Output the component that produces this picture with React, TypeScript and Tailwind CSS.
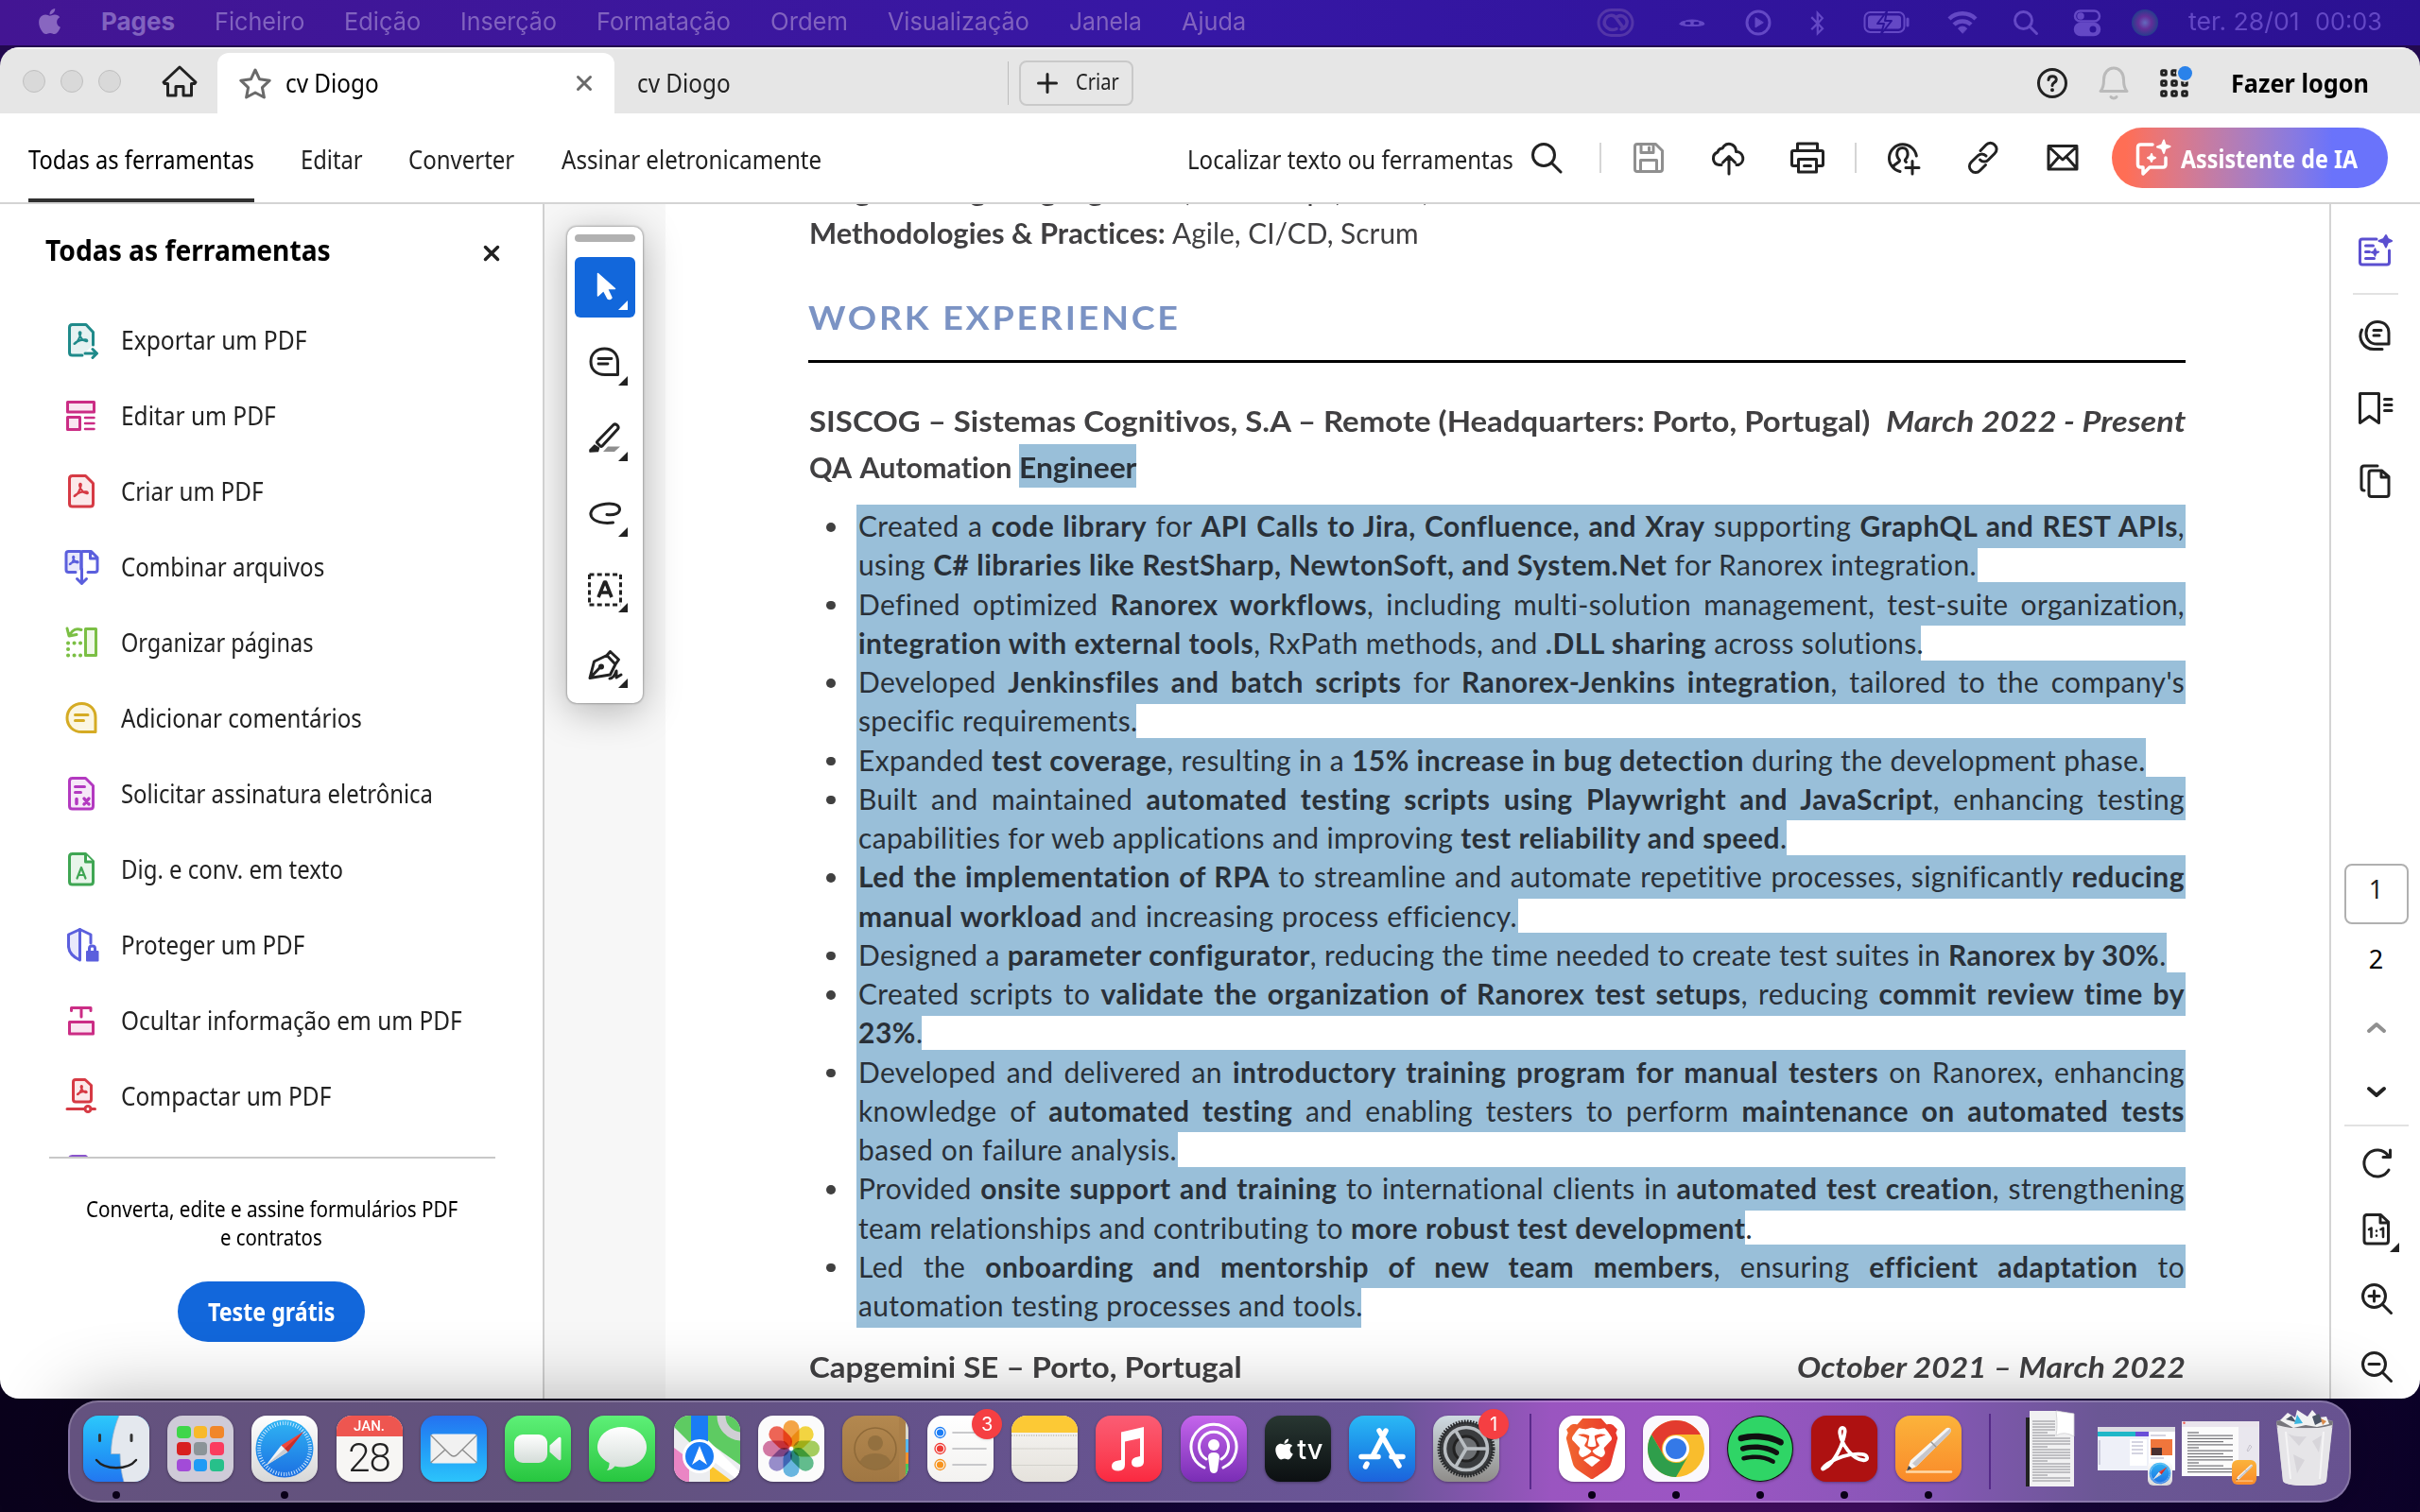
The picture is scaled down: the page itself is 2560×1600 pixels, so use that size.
import React, { useLayoutEffect, useRef, useState } from "react";
import { FaApple, FaSpotify, FaBluetoothB } from "react-icons/fa";
import { SiBrave } from "react-icons/si";

/* Text squeezed horizontally so that it fills exactly `w` pixels. */
function Fit({ w, className = "", children }: { w: number; className?: string; children: React.ReactNode }) {
  const ref = useRef<HTMLSpanElement>(null);
  const [k, setK] = useState(1);
  useLayoutEffect(() => {
    if (ref.current) setK(w / ref.current.offsetWidth);
  }, [w]);
  return (
    <span className={"block shrink-0 whitespace-nowrap " + className} style={{ width: w }}>
      <span ref={ref} className="inline-block origin-left" style={{ transform: `scaleX(${k})` }}>
        {children}
      </span>
    </span>
  );
}

type IconProps = { w?: number; h?: number; className?: string; sw?: number; children: React.ReactNode };
function Svg({ w = 40, h = 40, className = "", sw = 3, children }: IconProps) {
  return (
    <svg
      width={w}
      height={h}
      viewBox={`0 0 ${w} ${h}`}
      className={"block shrink-0 " + className}
      fill="none"
      stroke="currentColor"
      strokeWidth={sw}
      strokeLinecap="round"
      strokeLinejoin="round"
    >
      {children}
    </svg>
  );
}

const SWIRL =
  "M5 19c3-1.5 6.5-8 7.2-13 .3-2.2-2.2-2.2-1.8.5C11 10.5 15 16 19 16.2c2 .1 1.5-2-.5-2.2-4.5-.4-9 1.2-12.5 3.4-2 1.4-2.5 2.6-1 1.6z";

/* ---------- menu bar ---------- */

function MenuBar() {
  return (
    <header className="flex h-12 shrink-0 items-center bg-linear-to-r from-[#431593] via-[#3617a5] to-[#2b1192] font-['Inter'] text-[26px] leading-[45px] text-[#8163bf]">
      <FaApple className="ml-[37px] size-[31px] shrink-0 -translate-y-0.5 text-[#8866c0]" />
      <Fit w={78} className="ml-[39px] h-12 font-bold">Pages</Fit>
      <Fit w={95} className="ml-[42px] h-12">Ficheiro</Fit>
      <Fit w={81} className="ml-[42px] h-12">Edição</Fit>
      <Fit w={102} className="ml-[42px] h-12">Inserção</Fit>
      <Fit w={142} className="ml-[42px] h-12">Formatação</Fit>
      <Fit w={82} className="ml-[42px] h-12">Ordem</Fit>
      <Fit w={150} className="ml-[42px] h-12">Visualização</Fit>
      <Fit w={77} className="ml-[42px] h-12">Janela</Fit>
      <Fit w={68} className="ml-[42px] h-12">Ajuda</Fit>
      <div className="ml-[371px] flex h-12 items-center text-[#6448c5]">
        <Svg w={40} h={30} sw={3} className="text-[#5335a8]">
          <rect x="2" y="1.500" width="36" height="27" rx="13.500" />
          <path d="M21 21.500C13 25 6 18 9 11.500c2.500-5 8.500-5.500 11.500-1.500l7 9.500M22 8.500c6-3 12 3 9.500 9-1 2.500-3 4-5.500 4.500" strokeWidth="3.500" />
        </Svg>
        <Svg w={30} h={12} sw={2.500} className="ml-[46px]">
          <path d="M2 7.500q0-2.500 5-3 3-1.500 8-1.500t8 1.500q5 .5 5 3-1 2-13 2t-13-2z" fill="currentColor" strokeWidth="1" />
          <path d="M9 6.500h3M18 6.500h3" stroke="#2d1399" strokeWidth="3" />
        </Svg>
        <Svg w={30} h={30} sw={3} className="ml-[40px]">
          <circle cx="15" cy="15" r="12" />
          <path d="M12 10v10l8-5z" fill="currentColor" strokeWidth="1" />
        </Svg>
        <FaBluetoothB className="ml-[34px] size-[27px]" />
        <Svg w={50} h={28} sw={2} className="ml-[35px]">
          <rect x="1.500" y="3" width="42" height="21" rx="6" />
          <rect x="5" y="6.500" width="35" height="14" rx="3" fill="currentColor" stroke="none" />
          <path d="M47 10v7" strokeWidth="3" />
          <path d="M25 2 15 15h7l-3 11 11-14h-7z" fill="currentColor" stroke="#2d1399" strokeWidth="2" />
        </Svg>
        <Svg w={36} h={28} sw={4.500} className="ml-[37px]">
          <path d="M4 10a20 20 0 0 1 28 0M9 16a13 13 0 0 1 18 0" strokeLinecap="butt" />
          <path d="M18 25l-4.500-5a6 6 0 0 1 9 0z" fill="currentColor" strokeWidth="1" />
        </Svg>
        <Svg w={28} h={28} sw={3} className="ml-[35px]">
          <circle cx="11.500" cy="11.500" r="9" />
          <path d="M18 18l7.500 7.500" />
        </Svg>
        <Svg w={30} h={30} sw={2.500} className="ml-[36px]">
          <rect x="2" y="2.500" width="26" height="11" rx="5.500" />
          <circle cx="8" cy="8" r="2.500" fill="currentColor" />
          <rect x="2" y="16" width="26" height="12" rx="6" fill="currentColor" />
          <circle cx="21" cy="22" r="3.500" fill="#2d1399" stroke="none" />
        </Svg>
        <div className="ml-[32px] size-[28px] rounded-full bg-[radial-gradient(circle_at_50%_50%,#7a8fd0_0%,#7a3a98_35%,#254f8a_70%,#2b4078_100%)] opacity-70" />
        <Fit w={118} className="ml-[32px] h-12">ter. 28/01</Fit>
        <Fit w={71} className="ml-[16px] h-12">00:03</Fit>
      </div>
    </header>
  );
}

/* ---------- title bar with tabs ---------- */

function TitleBar() {
  return (
    <div className="flex h-[70px] shrink-0 items-center border-t-2 border-[#f4f4f4] bg-[#e6e6e6] font-['Noto_Sans'] text-[27px] leading-[68px] text-[#222]">
      <div className="ml-6 flex gap-4">
        <i className="size-6 rounded-full border border-[#bfbfbf] bg-[#d9d9d9]" />
        <i className="size-6 rounded-full border border-[#bfbfbf] bg-[#d9d9d9]" />
        <i className="size-6 rounded-full border border-[#bfbfbf] bg-[#d9d9d9]" />
      </div>
      <Svg w={40} h={36} className="ml-[42px]">
        <path d="M3 19 20 3l17 16-1 1.500h-3.500V33H24V23.500h-8V33H7.500V20.500H4z" />
      </Svg>
      <div className="ml-[20px] mt-1 flex h-16 w-[420px] items-center rounded-t-xl bg-white text-black">
        <Svg w={36} h={34} className="ml-[22px] text-[#6a6a6a]" sw={3}>
          <path d="M18 3l4.600 9.800 10.600 1.400-7.800 7.400 2 10.400L18 27l-9.400 5 2-10.400-7.800-7.400 10.600-1.400z" />
        </Svg>
        <Fit w={99} className="ml-[14px] h-16 leading-[64px]">cv Diogo</Fit>
        <Svg w={18} h={18} className="ml-[208px] text-[#6a6a6a]">
          <path d="M2.500 2.500l13 13M15.500 2.500l-13 13" />
        </Svg>
      </div>
      <Fit w={99} className="ml-[24px] mt-1 h-16 leading-[64px]">cv Diogo</Fit>
      <div className="ml-[293px] mt-1 h-[46px] w-px bg-[#bdbdbd]" />
      <button className="ml-[11px] mt-1 flex h-12 w-[121px] items-center rounded-lg border-2 border-[#c9c9c9] text-[24px]">
        <Svg w={22} h={22} className="ml-[17px]">
          <path d="M11 1.500v19M1.500 11h19" />
        </Svg>
        <Fit w={46} className="ml-[19px] h-11 leading-[40px]">Criar</Fit>
      </button>
      <Svg w={34} h={34} className="ml-[955px] mt-1">
        <circle cx="17" cy="17" r="14.500" />
        <path d="M13 13.500c.3-5 8.300-5 8.300-.3 0 3.200-4.300 3-4.300 6.300" />
        <circle cx="17" cy="24.300" r="1" fill="currentColor" strokeWidth="2" />
      </Svg>
      <Svg w={34} h={38} className="ml-[31px] mt-1 text-[#bababa]">
        <path d="M3 27.500h28c-3-3-3.500-6-3.500-12C27.500 8 23 3 17 3S6.500 8 6.500 15.500c0 6-.5 9-3.500 12zM14 33.500c1.500 2 4.500 2 6 0" />
      </Svg>
      <div className="relative ml-[32px] mt-1">
        <Svg w={30} h={30} sw={3}>
          {[4, 15, 26].map((y) =>
            [4, 15, 26].map((x) => <rect key={x + "-" + y} x={x - 2.300} y={y - 2.300} width="4.600" height="4.600" rx="1" />)
          )}
        </Svg>
        <i className="absolute -top-[3px] right-[-4px] size-[15px] rounded-full bg-[#2a82ea] ring-2 ring-[#e6e6e6]" />
      </div>
      <Fit w={146} className="ml-[45px] mt-1 h-16 font-bold leading-[64px] text-black">Fazer logon</Fit>
    </div>
  );
}

/* ---------- toolbar ---------- */

function ToolBar() {
  return (
    <div className="flex h-24 shrink-0 items-center border-b-2 border-[#d4d4d4] bg-white font-['Noto_Sans'] text-[27px] leading-[97px] text-[#222]">
      <div className="ml-[30px] h-[94px] border-b-4 border-[#303030] text-black">
        <Fit w={239}>Todas as ferramentas</Fit>
      </div>
      <Fit w={66} className="ml-[49px] h-[94px]">Editar</Fit>
      <Fit w={112} className="ml-[48px] h-[94px]">Converter</Fit>
      <Fit w={275} className="ml-[50px] h-[94px]">Assinar eletronicamente</Fit>
      <Fit w={345} className="ml-[387px] h-[94px]">Localizar texto ou ferramentas</Fit>
      <Svg w={34} h={34} className="ml-[18px]">
        <circle cx="14" cy="14" r="11.500" />
        <path d="M22.500 22.500 32 32" />
      </Svg>
      <div className="ml-[39px] h-8 w-0.5 bg-[#d5d5d5]" />
      <Svg w={34} h={34} className="ml-[33px] text-[#8f8f8f]">
        <path d="M5 2.500h19.500l7 7V29q0 2.500-2.500 2.500H5Q2.500 31.500 2.500 29V5Q2.500 2.500 5 2.500zM9 3v8.500h13V3M8.500 31V19.500h17V31" />
        <path d="M17.500 6v3" />
      </Svg>
      <Svg w={40} h={38} className="ml-[48px]">
        <path d="M12 26.500H9.500A7 7 0 0 1 8 13c1-3 3-4 5-4 2-4 6-6 10-4 3 1.300 4.500 4.500 4.500 7.500A7.200 7.200 0 0 1 30 26.500h-2M20 36V18M13.500 24l6.500-6.500 6.500 6.500" />
      </Svg>
      <Svg w={38} h={36} className="ml-[44px]">
        <path d="M8.500 10V3h21v7M8.500 26.500H4q-1.500 0-1.500-1.500V12Q2.500 10.500 4 10.500h30q1.500 0 1.500 1.500v13q0 1.500-1.500 1.500h-4.500M9.500 19.500h19V33h-19zM15.500 26.500h7" />
      </Svg>
      <div className="ml-[31px] h-8 w-0.5 bg-[#d5d5d5]" />
      <Svg w={40} h={38} className="ml-[30px]">
        <path d="M16 33.500A14.500 14.500 0 1 1 33.300 17M9 28.500c1-4 7-4 6.500-7C11 17 12 8.500 18.500 8.500s7 8.500 3 12.500c-.5 1 .3 2 1 2.500M29 22.500v13.500M22 29.500h14" />
      </Svg>
      <Svg w={36} h={36} className="ml-[46px]">
        <path d="M15 10.500l6-6.200a6 6 0 0 1 9 0c2.800 2.500 2.800 6.500 0 9.200l-6.500 6.500a6 6 0 0 1-9 0M20.500 25.500l-6 6a6.200 6.200 0 0 1-9.200 0c-2.500-2.500-2.500-6.300 0-9L12 16a6 6 0 0 1 9 0" />
      </Svg>
      <Svg w={36} h={30} className="ml-[48px]">
        <path d="M3 2.500h30v24.500H3zM3 3l15 14L33 3M3 26.500l11-12.500M33 26.500 22 14" />
      </Svg>
      <button className="ml-[34px] flex h-16 w-[292px] items-center rounded-full bg-linear-to-r from-[#ff6e55] from-5% to-[#6a73fb] to-80% text-white">
        <Svg w={40} h={40} className="ml-[24px]" sw={3.500}>
          <path d="M19 6H6.500Q3.500 6 3.500 9v18q0 3 3 3H9v7l7-7h14q3 0 3-3V20" />
          <path d="M31 1.500l1.500 5 5 1.500-5 2-1.500 5-2-5-5-1.500 5-2z" fill="currentColor" strokeWidth="2" />
          <path d="M18 16l1 3 3 1-3 1.300-1 2.700-1.200-2.700-2.800-1.300 2.800-1z" fill="currentColor" strokeWidth="2" />
        </Svg>
        <Fit w={187} className="ml-[9px] h-16 font-bold leading-[66px]">Assistente de IA</Fit>
      </button>
    </div>
  );
}

/* ---------- left panel ---------- */

const DOC = "M10 3.500h14.500l8 8V33q0 3-3 3H10.500q-3 0-3-3V6.500q0-3 3-3z";
function Swirl({ x, y, s = 1 }: { x: number; y: number; s?: number }) {
  return <path d={SWIRL} transform={`translate(${x} ${y}) scale(${s})`} strokeWidth={2.200 / s} />;
}

const TOOLS: { label: string; w: number; color: string; icon: React.ReactNode }[] = [
  {
    label: "Exportar um PDF", w: 196, color: "text-[#1f8a8a]",
    icon: (<><path d="M21 36H10.500q-3 0-3-3V6.500q0-3 3-3h14.500l7.500 8V25" fill="#e6f2f2" /><Swirl x={9} y={7.500} s={0.850} /><path d="M24 34h12M32 29.500l4.500 4.500-4.500 4.500" /></>),
  },
  {
    label: "Editar um PDF", w: 164, color: "text-[#cb2d85]",
    icon: (<><rect x="5.500" y="5.500" width="28" height="10.500" fill="#f9e6f1" /><rect x="5.500" y="21.500" width="13" height="13" fill="#f9e6f1" /><path d="M24 22h9.500M24 28h9.500M24 34h9.500" strokeWidth="2.500" /></>),
  },
  {
    label: "Criar um PDF", w: 151, color: "text-[#d63a44]",
    icon: (<><path d={DOC} fill="#fbe9ea" /><Swirl x={9} y={8} s={0.880} /></>),
  },
  {
    label: "Combinar arquivos", w: 215, color: "text-[#5b5fdd]",
    icon: (<><path d="M14 25.500H6.500Q4 25.500 4 23V6q0-2.500 2.500-2.500h12q1.500 0 1.500 2v17" fill="#e9e9fb" /><path d="M20 22V5.500q0-2 1.500-2h9L37 10v13q0 2.500-2.500 2.500H27M29.500 4v7H37M20.500 22v14M15.500 32.500l5 5 5-5" /><Swirl x={5.500} y={6.500} s={0.550} /></>),
  },
  {
    label: "Organizar páginas", w: 203, color: "text-[#7bbf44]",
    icon: (<><rect x="24.500" y="5.500" width="11" height="28" fill="#f0f8e9" /><path d="M20 6.500c-5-2-9.500 0-12 5M5 5l2 8 8-1.500" /><path d="M6 20.500h.1M12.500 20.500h.1M19 20.500h.1M6 27h.1M6 33.500h.1M12.500 33.500h.1M19 33.500h.1" strokeWidth="4" /></>),
  },
  {
    label: "Adicionar comentários", w: 255, color: "text-[#d5ab24]",
    icon: (<><path d="M20.500 4.500c9 0 14.500 6.500 14.500 14.500v15.500H20.500C11 34.500 5 28 5 19.500S11.500 4.500 20.500 4.500z" fill="#fbf6e3" /><path d="M13.500 16.500H27M13.500 22.500h9" /></>),
  },
  {
    label: "Solicitar assinatura eletrônica", w: 330, color: "text-[#b339c0]",
    icon: (<><path d={DOC} fill="#f6e8f8" /><path d="M13.500 12.500h10M13.500 18.500h6" /><path d="M15 25.500v5M23 25l5 6M28 25l-5 6" strokeWidth="3.500" /></>),
  },
  {
    label: "Dig. e conv. em texto", w: 235, color: "text-[#3fa653]",
    icon: (<><path d={DOC} fill="#e8f5ea" /><path d="M24.500 4v8h8" fill="#fff" /><path d="M15.500 29.500 20 18l4.500 11.500M17 26h6" strokeWidth="2.200" /></>),
  },
  {
    label: "Proteger um PDF", w: 194, color: "text-[#5b5fdd]",
    icon: (<><path d="M18.500 3.500 6.500 9v13q1 9 12 14z" fill="#e9e9fb" /><path d="M18.500 3.500 30 9v9" /><rect x="26" y="27" width="11.500" height="9.500" fill="currentColor" strokeWidth="2" /><path d="M28.500 27v-3.500q0-2.500 3-2.500t3 2.500V27" /></>),
  },
  {
    label: "Ocultar informação em um PDF", w: 361, color: "text-[#cb2d85]",
    icon: (<><rect x="7.500" y="21.500" width="25" height="12.500" fill="#f9e6f1" /><path d="M9.500 9.500v-3h20.500v3M20 7v9" /></>),
  },
  {
    label: "Compactar um PDF", w: 222, color: "text-[#d63a44]",
    icon: (<><path d="M14 2.500h10l6.500 6v15q0 2.500-2.500 2.500H14q-2.500 0-2.500-2.500V5q0-2.500 2.500-2.500z" fill="#fbe9ea" /><Swirl x={13.500} y={6.500} s={0.600} /><path d="M5 33.500h18M30 33.500h4.500" /><circle cx="27" cy="33.500" r="3" /></>),
  },
];

function Sidebar() {
  return (
    <aside className="flex w-[576px] shrink-0 flex-col border-r-2 border-[#d0d0d0] bg-white font-['Noto_Sans'] text-[27px] text-[#222]">
      <div className="mt-[20px] flex h-14 items-center">
        <Fit w={302} className="ml-12 text-[31px] font-bold leading-[46px] text-black">Todas as ferramentas</Fit>
        <Svg w={18} h={18} className="ml-[161px] mt-[7px]" sw={3.500}>
          <path d="M2.500 2.500l13 13M15.500 2.500l-13 13" />
        </Svg>
      </div>
      <ul className="mt-[28px] h-[904px] overflow-hidden">
        {TOOLS.map((t) => (
          <li key={t.label} className="flex h-20 items-center leading-[80px]">
            <Svg className={"ml-[66px] " + t.color}>{t.icon}</Svg>
            <Fit w={t.w} className="ml-[22px]">{t.label}</Fit>
          </li>
        ))}
        <li className="flex h-20">
          <Svg className="ml-[66px] mt-[20px] text-[#8a55cc]">
            <path d={DOC} />
          </Svg>
        </li>
      </ul>
      <div className="ml-[52px] h-0.5 w-[472px] bg-[#c8c8c8]" />
      <div className="mt-[38px] flex w-[574px] flex-col items-center text-[23px] leading-[30px] text-black">
        <Fit w={393}>Converta, edite e assine formulários PDF</Fit>
        <Fit w={108}>e contratos</Fit>
        <button className="mt-[32px] flex h-16 w-[198px] items-center justify-center rounded-full bg-[#1267db] text-[27px] font-bold leading-[62px] text-white">
          <Fit w={134}>Teste grátis</Fit>
        </button>
      </div>
    </aside>
  );
}

/* ---------- floating quick tools ---------- */

function Corner() {
  return (
    <svg width="10" height="10" className="absolute bottom-2 right-2" fill="currentColor">
      <path d="M10 0v10H0z" />
    </svg>
  );
}

const BUBBLE = "M19.500 5c9 0 14 6 14 14v13.500H20C10 32.500 5 26.500 5 18.500S11 5 19.500 5z";

function QuickTools() {
  const cell = "relative flex size-16 items-center justify-center rounded-md";
  return (
    <div className="absolute left-6 top-6 z-20 flex w-20 flex-col items-center gap-4 rounded-[10px] bg-white px-2 py-2 text-[#222] shadow-[0_0_2px_1px_rgba(0,0,0,0.25),0_8px_40px_rgba(0,0,0,0.28)]">
      <div className="h-2 w-16 rounded-full bg-[#b1b1b1]" />
      <div className={cell + " bg-[#1267db] text-white"}>
        <Svg sw={1.500}>
          <path d="M12.500 5.500v23.500l6-5.500 4.500 8.500q2 1.500 4-1l-4.500-9.500h8z" fill="currentColor" />
        </Svg>
        <Corner />
      </div>
      <div className={cell}>
        <Svg><path d={BUBBLE} /><path d="M13 15.500h14M13 21h10" strokeWidth="2.800" /></Svg>
        <Corner />
      </div>
      <div className={cell}>
        <Svg>
          <path d="M18 34h12l6-5.500H23z" fill="#8f8f8f" stroke="none" />
          <path d="M12 23 29 5.500q2-1.500 4 .5t.5 4L17 28q-1 1-2 0l-3-3q-1-1 0-2z" />
          <path d="M4 34v-2l5-5 4.500 3-1 3.500z" fill="currentColor" strokeWidth="1.500" />
        </Svg>
        <Corner />
      </div>
      <div className={cell}>
        <Svg><path d="M22 20.500c8 1 14-1.500 13.500-6-.5-5.500-10-6.500-19-4.500C7 12 3.500 17.500 5.500 22.500 8 28 18 30.500 28.500 29" /></Svg>
        <Corner />
      </div>
      <div className={cell}>
        <Svg>
          <path d="M3.500 4h33M3.500 36h33M3.500 4v32M36.500 4v32" strokeDasharray="5 3.200" strokeLinecap="butt" />
          <path d="M13 28 19.500 12h1.200L27 28M15.500 23h9" strokeLinecap="butt" strokeWidth="3.600" />
        </Svg>
        <Corner />
      </div>
      <div className={cell}>
        <Svg>
          <path d="M4 33.500 8.500 16 22 9.500l9 9.500-5.500 11zM22 9.500 25.500 5.500l9 8.500-3.500 5M4.500 33 15 22M25 34c4 0 7-8 7-8v7l5-3" />
          <circle cx="16" cy="21.500" r="1.500" fill="currentColor" />
        </Svg>
        <Corner />
      </div>
    </div>
  );
}

/* ---------- document ---------- */

/* Runs between ** are bold. */
function Rich({ text }: { text: string }) {
  return (
    <>
      {text.split("**").map((s, i) =>
        i % 2 ? <b key={i} className="font-bold tracking-[0.5px]">{s}</b> : <React.Fragment key={i}>{s}</React.Fragment>
      )}
    </>
  );
}

/* [starts a bullet, highlight width, text] */
const LINES: [boolean, number, string][] = [
  [true, 1406, "Created a **code library** for **API Calls to Jira, Confluence, and Xray** supporting **GraphQL and REST APIs**,"],
  [false, 1186, "using **C# libraries like RestSharp, NewtonSoft, and System.Net** for Ranorex integration."],
  [true, 1406, "Defined optimized **Ranorex workflows**, including multi-solution management, test-suite organization,"],
  [false, 1126, "**integration with external tools**, RxPath methods, and **.DLL sharing** across solutions."],
  [true, 1406, "Developed **Jenkinsfiles and batch scripts** for **Ranorex-Jenkins integration**, tailored to the company's"],
  [false, 296, "specific requirements."],
  [true, 1364, "Expanded **test coverage**, resulting in a **15% increase in bug detection** during the development phase."],
  [true, 1406, "Built and maintained **automated testing scripts using Playwright and JavaScript**, enhancing testing"],
  [false, 984, "capabilities for web applications and improving **test reliability and speed**."],
  [true, 1406, "**Led the implementation of RPA** to streamline and automate repetitive processes, significantly **reducing**"],
  [false, 700, "**manual workload** and increasing process efficiency."],
  [true, 1386, "Designed a **parameter configurator**, reducing the time needed to create test suites in **Ranorex by 30%**."],
  [true, 1406, "Created scripts to **validate the organization of Ranorex test setups**, reducing **commit review time by**"],
  [false, 69, "**23%**."],
  [true, 1406, "Developed and delivered an **introductory training program for manual testers** on Ranorex**,** enhancing"],
  [false, 1406, "knowledge of **automated testing** and enabling testers to perform **maintenance on automated tests**"],
  [false, 340, "based on failure analysis."],
  [true, 1406, "Provided **onsite support and training** to international clients in **automated test creation**, strengthening"],
  [false, 940, "team relationships and contributing to **more robust test development**."],
  [true, 1406, "Led the **onboarding and mentorship of new team members**, ensuring **efficient adaptation** to"],
  [false, 534, "automation testing processes and tools."],
];

function Document() {
  return (
    <main className="flex flex-1 overflow-hidden bg-[#f7f7f7]">
      <div className="w-32 shrink-0" />
      <article className="w-[1760px] bg-white pl-[151px] font-['Lato'] text-[30px] leading-[41.25px] text-[#414042] [font-variant-ligatures:none]">
        <div className="-mt-[35px] ml-px flex h-[44.75px] gap-2">
          <Fit w={349} className="font-bold">Programming Languages:</Fit>
          <Fit w={206}>C#, JavaScript,</Fit>
          <Fit w={140}>HTML, CSS</Fit>
        </div>
        <div className="ml-px flex h-[41.25px] gap-[7px]">
          <Fit w={377} className="font-bold">Methodologies &amp; Practices:</Fit>
          <Fit w={261}>Agile, CI/CD, Scrum</Fit>
        </div>
        <h2 className="mt-[46.500px] h-[42px] text-[35px] font-bold leading-[42px] tracking-[2.500px] text-[#7b93c4]">
          <Fit w={394}>WORK EXPERIENCE</Fit>
        </h2>
        <div className="mt-[25.500px] h-[3px] w-[1457px] bg-black" />
        <div className="ml-px mt-[40.500px] flex h-[41px] w-[1456px] justify-between font-bold">
          <Fit w={1122}>SISCOG – Sistemas Cognitivos, S.A – Remote (Headquarters: Porto, Portugal)</Fit>
          <Fit w={317} className="italic">March 2022 - Present</Fit>
        </div>
        <div className="ml-px mt-[4px] flex h-[46px] items-start font-bold">
          <Fit w={214} className="pt-[4px] [word-spacing:3px]">QA Automation</Fit>
          <div className="ml-[8px] h-[46px] bg-[#99bfd9] pt-[4px] text-[#293038]">
            <Fit w={124}>Engineer</Fit>
          </div>
        </div>
        <ul className="mt-[18px]">
          {LINES.map(([bullet, w, text]) => (
            <li key={text} className="flex h-[41.25px] w-[1457px]">
              <div className="w-[51px] shrink-0 pl-[19px] pt-[19.500px]">
                {bullet && <i className="block size-[9.500px] rounded-full bg-[#404040]" />}
              </div>
              <div className="h-[46px] shrink-0 bg-[#99bfd9] pl-0.5 pr-px text-[#293038]" style={{ width: w }}>
                <div className="relative z-10 whitespace-nowrap pt-[2.500px] text-justify tracking-[0.35px] [text-align-last:justify]">
                  <Rich text={text} />
                </div>
              </div>
            </li>
          ))}
        </ul>
        <div className="ml-px mt-[26px] flex w-[1456px] justify-between font-bold">
          <Fit w={458}>Capgemini SE – Porto, Portugal</Fit>
          <Fit w={411} className="italic">October 2021 – March 2022</Fit>
        </div>
      </article>
    </main>
  );
}

/* ---------- right rail ---------- */

function Rail() {
  return (
    <aside className="flex w-24 shrink-0 flex-col items-center border-l-2 border-[#d4d4d4] bg-white pl-px font-['Noto_Sans'] text-[27px] leading-none text-[#222]">
      <Svg className="mr-[4px] mt-[29px] text-[#5b4fd0]">
        <path d="M22 8H7Q4.500 8 4.500 10.500v22Q4.500 35 7 35h26q2.500 0 2.500-2.500V20M10.500 15h8M10.500 21.500h4M10.500 28.500h9" />
        <path d="M32 4l2 4 4 2-4 1.500-2 5-2.500-5-5-1.500 5-2z" fill="currentColor" strokeWidth="2" />
        <path d="M20.500 18l1 3 3 .5-3 1.500-1 3-1.500-3-2.500-1 2.500-1z" fill="currentColor" strokeWidth="1.500" />
      </Svg>
      <div className="mr-[2px] mt-[25px] h-0.5 w-12 bg-[#e2e2e2]" />
      <Svg className="mr-[4px] mt-[24px]">
        <path d="M23 4.500c7.500 0 12 5 12 11.500v12H22.500C15 28 11 23 11 16.500S15.500 4.500 23 4.500zM19 13.500h8M19 19h6" />
        <path d="M6.500 13C2 22 8 33.500 19 33.500h9" />
      </Svg>
      <Svg className="mr-[4px] mt-[36px]">
        <path d="M4.500 4.500h20v31l-10-7-10 7zM30.500 10.500H38M30.500 16.500H38M30.500 22.500H38" />
      </Svg>
      <Svg className="mr-[4px] mt-[38px]">
        <path d="M14 10.500q0-2.500 2.500-2.500h11l7.500 6.500V33q0 2.500-2.500 2.500h-16Q14 35.500 14 33zM27 8.500V15h7.500" />
        <path d="M9 29q-3 0-3-3V6q0-3 3-3h14" />
      </Svg>
      <div className="mt-[384px] flex h-16 w-[68px] justify-center rounded-lg border-2 border-[#b0b0b0] pt-[11px]">1</div>
      <div className="mt-[23px] text-black">2</div>
      <Svg w={24} h={16} className="mt-[51px] text-[#909090]" sw={4}>
        <path d="M4 12l8-7 8 7" />
      </Svg>
      <Svg w={24} h={16} className="mt-[53px]" sw={4}>
        <path d="M4 4l8 7 8-7" />
      </Svg>
      <div className="mt-[26px] h-0.5 w-[68px] bg-[#e2e2e2]" />
      <Svg className="mt-[20px]">
        <path d="M33 26a14 14 0 1 1-1-15.500M34.500 5v7.500H27" />
      </Svg>
      <div className="relative mt-[29px]">
        <Svg>
          <path d="M9 4.500h15.500l8 7.500v20q0 3-3 3H10q-3 0-3-3V7.500q0-3 3-3zM24 5v8h8" />
          <path d="M12 20l2.500-1.500V28M24.500 20l2.500-1.500V28M20 21.500v.1M20 26.500v.1" strokeWidth="2.600" />
        </Svg>
        <svg width="10" height="10" className="absolute -right-1 top-[34px]" fill="currentColor">
          <path d="M10 0v10H0z" />
        </svg>
      </div>
      <Svg className="mt-[34px]">
        <circle cx="17.500" cy="16.500" r="12" />
        <path d="M26.500 25.500l9 9M17.500 11v11M12 16.500h11" />
      </Svg>
      <Svg className="mt-[32px]">
        <circle cx="17.500" cy="16.500" r="12" />
        <path d="M26.500 25.500l9 9M12 16.500h11" />
      </Svg>
    </aside>
  );
}

/* ---------- dock ---------- */

function Tile({ children, className = "", dot = false, badge, cell = "w-[89.3px]" }: { children: React.ReactNode; className?: string; dot?: boolean; badge?: string; cell?: string }) {
  return (
    <div className={"relative flex h-full shrink-0 justify-center pt-[14px] " + cell}>
      <div className={"h-[70px] w-[70px] overflow-hidden rounded-[16px] shadow-[0_1px_3px_rgba(0,0,0,0.35)] " + className}>{children}</div>
      {badge && (
        <div className="absolute right-0 top-[7px] flex size-8 items-center justify-center rounded-full bg-[#f53f42] font-['Inter'] text-[20px] leading-none text-white shadow">{badge}</div>
      )}
      {dot && <i className="absolute top-[94px] size-2 rounded-full bg-[#0a0018]" />}
    </div>
  );
}

function Art({ children, box = "0 0 70 70" }: { children: React.ReactNode; box?: string }) {
  return <svg viewBox={box} className="block size-full" fill="none" strokeLinecap="round" strokeLinejoin="round">{children}</svg>;
}

function Compass() {
  return (
    <>
      <circle cx="35" cy="35" r="30.500" fill="url(#sea)" />
      <circle cx="35" cy="35" r="27" stroke="#d7ecff" strokeWidth="4" strokeDasharray="0.900 1.930" strokeLinecap="butt" />
      <path d="M55 17 31.500 31.500l7 7z" fill="#f0473c" />
      <path d="M15 53l16.500-21.500 7 7z" fill="#f4f4f4" />
      <path d="M55 17 35 35l3.500 3.500z" fill="#c92f2a" />
      <path d="M15 53l20-18 3.500 3.500z" fill="#c9ccd2" />
    </>
  );
}

function PagesArt() {
  return (
    <>
      <path d="M12 59.500h47" stroke="#ffd9a8" strokeWidth="2.500" />
      <path d="M12 58.500l4-11L52 15q3-3.500 6-1.500 2 3-1.500 6.500L22 54z" fill="#f4f4f4" />
      <path d="M22 54 56.500 20q3.500-3.500 1.500-6.500L18 50.500z" fill="#c6c6cc" />
      <path d="M12 58.500l2-5.500 3.500 3z" fill="#444" />
      <path d="M38 28l5 5" stroke="#999" strokeWidth="1.500" />
    </>
  );
}

const PETALS = ["#f79b2e", "#f5d327", "#9ccb4a", "#4db680", "#55aee0", "#8c7fc8", "#d0689a", "#f0523f"];
const LAUNCH = ["#3fd64a", "#f8b92a", "#f1862a", "#d8201f", "#8b9498", "#fb3c5f", "#a24bd8", "#1f9bf5", "#27c08a"];

function Divider({ className }: { className: string }) {
  return (
    <div className={"flex h-full shrink-0 justify-center pt-3 " + className}>
      <div className="h-20 w-0.5 bg-[#4b1f80]/80" />
    </div>
  );
}

function Dock() {
  return (
    <nav className="relative z-30 ml-[72px] mt-0.5 flex h-[108px] w-[2415px] shrink-0 rounded-[32px] border-2 border-white/20 bg-[linear-gradient(90deg,#64527f_0%,#62527c_22%,#64528a_35%,#6a5597_58%,#9a55c0_65%,#9c55c4_72%,#8457b4_82%,#6b5795_89%,#675290_100%)] pl-[4px] shadow-[0_0_80px_rgba(0,0,0,0.3)]">
      <svg width="0" height="0" className="absolute">
        <defs>
          <linearGradient id="sea" x1="0" y1="0" x2="0" y2="1"><stop offset="0" stopColor="#2fb4f3" /><stop offset="1" stopColor="#1c6fe2" /></linearGradient>
          <linearGradient id="silver" x1="0" y1="0" x2="0" y2="1"><stop offset="0" stopColor="#ffffff" /><stop offset="1" stopColor="#d4dcd8" /></linearGradient>
          <linearGradient id="lion" x1="0" y1="0" x2="1" y2="0"><stop offset="0" stopColor="#f1672f" /><stop offset="1" stopColor="#e8352c" /></linearGradient>
        </defs>
      </svg>

      <Tile dot className="bg-linear-to-b from-[#2dc8fb] to-[#2377f0]">
        <Art>
          <path d="M38 0C33 12 29.500 26 29.500 40.500H39c0 11 1.500 21 4 29.500h27V0z" fill="#e4e8ee" />
          <path d="M38 0C33 12 29.500 26 29.500 40.500H39c0 11 1.500 21 4 29.500" stroke="#9db4cc" strokeWidth=".8" />
          <path d="M17.500 20.500v6M51 20.500v6" stroke="#333" strokeWidth="3" />
          <path d="M14 47c9 11 33 11 42 0" stroke="#222" strokeWidth="2.400" />
        </Art>
      </Tile>
      <Tile className="bg-[#cfcbd8]">
        <div className="grid h-full grid-cols-3 content-center justify-center gap-x-[3px] gap-y-[4px] px-[10px]">
          {LAUNCH.map((c) => (
            <i key={c} className="h-[13.500px] rounded-[4px]" style={{ background: c }} />
          ))}
        </div>
      </Tile>
      <Tile dot className="bg-linear-to-b from-white to-[#d8d8d8]">
        <Art><Compass /></Art>
      </Tile>
      <Tile className="bg-[#f7f6f4] font-['Roboto']">
        <div className="flex h-[22px] items-center justify-center bg-[#ee5650] text-[15px] font-medium leading-none text-white">JAN.</div>
        <div className="text-center text-[42px] font-light leading-[46px] tracking-tight text-[#222]">28</div>
      </Tile>
      <Tile className="bg-linear-to-b from-[#2571f0] to-[#2cc4fb]">
        <Art>
          <rect x="10.500" y="19.500" width="49" height="31" rx="3" fill="#f1f1f1" />
          <path d="M11 21l20 20q4 4 8 0l20-20M11 49.500 26 36M59 49.500 44 36" stroke="#8d8d8d" strokeWidth="1.400" />
        </Art>
      </Tile>
      <Tile className="bg-linear-to-b from-[#5df077] to-[#26c63f]">
        <Art>
          <rect x="10" y="20" width="35" height="30" rx="9" fill="url(#silver)" />
          <path d="M47.500 31.500 57 23q2.500-1 2.500 1.500v21Q59.500 48 57 47l-9.500-8.500z" fill="url(#silver)" />
        </Art>
      </Tile>
      <Tile className="bg-linear-to-b from-[#5df077] to-[#26c63f]">
        <Art>
          <path d="M35 12c15 0 26 9.500 26 21.500S50 54.500 35 54.500q-4 0-7.500-1-3 4-8.500 4.500 3-3.500 2.500-8C13.500 46 9 40 9 33.500 9 21.500 20 12 35 12z" fill="url(#silver)" />
        </Art>
      </Tile>
      <Tile className="bg-[#ecedf0]">
        <Art>
          <path d="M0 0h18v30L0 12zM36 0h34v52L36 28z" fill="#5ecb62" />
          <path d="M0 34l16 12v24H0z" fill="#ea85c4" />
          <path d="M38 70V52l24 18z" fill="#fbc52d" />
          <path d="M36 26l34 34v10L36 44z" fill="#fff" />
          <path d="M50 0c0 12 9 21 20 22" stroke="#cfcfd4" strokeWidth="9" />
          <path d="M18 0h18v36H18z" fill="#1a7cf5" />
          <circle cx="27" cy="43" r="16.500" fill="#1a7cf5" stroke="#fff" strokeWidth="3" />
          <path d="M27 32l8 20-8-5.500-8 5.500z" fill="#fff" />
        </Art>
      </Tile>
      <Tile className="bg-[#fbfbfb]">
        <Art>
          {PETALS.map((c, i) => (
            <rect key={c} x="26.500" y="5" width="17" height="28" rx="8.500" fill={c} className="mix-blend-multiply" opacity=".88" transform={`rotate(${i * 45} 35 35)`} />
          ))}
        </Art>
      </Tile>
      <Tile className="bg-linear-to-b from-[#b3884f] to-[#a07743]">
        <Art>
          <path d="M66 0h4v70h-4z" fill="#d9d9d0" />
          <path d="M66 25h4v14h-4z" fill="#56b7f0" />
          <path d="M66 39h4v12h-4z" fill="#f2912e" />
          <path d="M66 51h4v12h-4z" fill="#46c65b" />
          <path d="M60 0h3q4 1 4 6v58q0 5-4 6h-3z" fill="#ab8049" />
          <circle cx="35" cy="35" r="22" stroke="#8f6a39" strokeWidth="1.600" />
          <circle cx="35" cy="29" r="8" fill="#93703f" />
          <path d="M18.500 49q4-9 16.500-9t16.500 9q-6 8-16.500 8t-16.500-8z" fill="#93703f" />
        </Art>
      </Tile>
      <Tile badge="3" className="bg-linear-to-b from-white to-[#f3f2f0]">
        <Art>
          {[["#1a7cf5", 18], ["#f03b35", 35], ["#f7931d", 52]].map(([c, y]) => (
            <g key={c}>
              <circle cx="13.500" cy={y} r="5.500" stroke={c as string} strokeWidth="1.300" />
              <circle cx="13.500" cy={y} r="3.600" fill={c as string} />
              <path d={`M27 ${y}h35`} stroke="#b9b9bd" strokeWidth="1.600" />
            </g>
          ))}
        </Art>
      </Tile>
      <Tile className="bg-linear-to-b from-[#f7f6f4] to-[#e5e2dc]">
        <Art>
          <path d="M0 0h70v18H0z" fill="#fcc935" />
          <path d="M0 21h70" stroke="#b5b2aa" strokeWidth="1.500" strokeDasharray="1 1.600" strokeLinecap="butt" />
          <path d="M0 35h70M0 52.500h70" stroke="#d3d1cc" strokeWidth="1" />
        </Art>
      </Tile>
      <Tile className="bg-linear-to-b from-[#fb5c74] to-[#fa2840]">
        <Art>
          <path d="M27 17.500 51 12v37q0 5-7 5.500-6 0-6-5 0-5 7-6l2-.5V24l-16 3.500V52q0 6-7 6.500-7 0-7-5 0-5 7-6l3-.5z" fill="#fff" />
        </Art>
      </Tile>
      <Tile className="bg-linear-to-b from-[#c565ec] to-[#7a2db5]">
        <Art>
          <path d="M25 55a24 24 0 1 1 20 0" stroke="#fff" strokeWidth="3" />
          <path d="M27 46a15.500 15.500 0 1 1 16 0" stroke="#fff" strokeWidth="3" />
          <circle cx="35" cy="31" r="6" fill="#fff" />
          <path d="M35 39q6 0 6 5l-2 14q-1 3-4 3t-4-3l-2-14q0-5 6-5z" fill="#fff" />
        </Art>
      </Tile>
      <Tile className="flex items-center justify-center bg-linear-to-b from-[#283732] to-[#0c1012] text-white">
        <FaApple className="size-[25px] shrink-0" />
        <span className="ml-px font-['Inter'] text-[29px] font-medium leading-none">tv</span>
      </Tile>
      <Tile className="bg-linear-to-b from-[#2bb9f5] to-[#1d62dc]">
        <Art>
          <path d="M39 16 25 43M32 16l21 37M13 43.500h18M45 43.500h12M19 51l-1.500 3" stroke="#fff" strokeWidth="5.500" />
        </Art>
      </Tile>
      <Tile badge="1" className="bg-linear-to-b from-[#cfdbe2] to-[#8f8d8a]">
        <Art>
          <circle cx="35" cy="35" r="28.500" fill="#3a3c3e" stroke="#26282a" strokeWidth="4" strokeDasharray="1.600 1.400" strokeLinecap="butt" />
          <circle cx="35" cy="35" r="22.500" stroke="#b9bec2" strokeWidth="3.500" />
          <circle cx="35" cy="35" r="13" fill="#6c6f72" stroke="#222" strokeWidth="3" />
          <path d="M35 35h21M35 35 24.500 17M35 35 24.500 53" stroke="#b9bec2" strokeWidth="3.500" />
        </Art>
      </Tile>

      <Divider className="w-[43px] pl-[3px]" />

      <Tile cell="w-[89px]" dot className="flex items-center justify-center bg-white">
        <SiBrave className="size-[64px] fill-[url(#lion)]" />
      </Tile>
      <Tile cell="w-[89px]" dot className="bg-[#faf8fd]">
        <Art>
          <circle cx="35" cy="35" r="30" fill="#f9bd2d" />
          <path d="M9 20A30 30 0 0 1 61 20H35a15 15 0 0 0-13 22.500z" fill="#e33b2e" />
          <path d="M9 20a30 30 0 0 0 26 45l13-22.500a15 15 0 0 1-26 0z" fill="#2f9e4b" />
          <circle cx="35" cy="35" r="14" fill="#fff" />
          <circle cx="35" cy="35" r="11" fill="#3479e8" />
        </Art>
      </Tile>
      <Tile cell="w-[89px]" dot className="rounded-full! bg-[#101010]">
        <FaSpotify className="size-[70px] text-[#2fd566]" />
      </Tile>
      <Tile cell="w-[89px]" dot className="bg-[#ae1111]">
        <Art box="0 0 24 24">
          <path d={SWIRL} stroke="#fff" strokeWidth="1.300" />
        </Art>
      </Tile>
      <Tile cell="w-[89px]" dot className="bg-linear-to-b from-[#fbb33b] to-[#f98a2a]">
        <Art><PagesArt /></Art>
      </Tile>

      <Divider className="w-[42px]" />

      <div className="flex h-full w-[89px] shrink-0 justify-center pr-1 pt-[8px]">
        <svg width="52" height="82" viewBox="0 0 52 82" fill="none">
          <path d="M0 8h4v73H0z" fill="#222" />
          <path d="M4 1h28l19 3v77H4z" fill="#f1f1f2" />
          {Array.from({ length: 22 }, (_, i) => (
            <path key={i} d={`M7 ${12 + i * 3}h${i % 5 === 4 ? 16 : i < 6 ? 24 : 40}`} stroke="#8c8c92" strokeWidth="1" />
          ))}
          <path d="M32 1q2 16 0 26 9-5 19 1V4z" fill="#fff" stroke="#cfcfd2" strokeWidth=".8" />
        </svg>
      </div>
      <div className="relative flex h-full w-[89px] shrink-0 justify-center pt-[26px]">
        <svg width="82" height="46" viewBox="0 0 82 46">
          <path d="M0 0h82v46H0z" fill="#eef0f8" />
          <path d="M0 0h82v5H0z" fill="#dcdce2" />
          <path d="M0 5h40v5H0z" fill="#1fb7c8" />
          <path d="M40 5h42v5H40z" fill="#6a4fd8" />
          <path d="M34 13h18v28H34z" fill="#fff" />
          <path d="M54 5h28v41H54z" fill="#fff" />
          <path d="M56 13h23v17H56z" fill="#f0763c" />
          <path d="M57 22h11v8H57z" fill="#4a3030" />
          <path d="M36 16h12M36 20h12M36 24h12M36 28h12M56 9h16M56 33h14M2 14v26" stroke="#a9a9c2" strokeWidth="1" />
        </svg>
        <div className="absolute left-[57px] top-[62px] size-[26px] overflow-hidden rounded-md bg-linear-to-b from-white to-[#d8d8d8]"><Art><Compass /></Art></div>
      </div>
      <div className="relative flex h-full w-[89px] shrink-0 justify-center pt-[20px]">
        <svg width="82" height="58" viewBox="0 0 82 58">
          <path d="M0 0h82v58H0z" fill="#fbfbfb" />
          <path d="M0 0h82v6H0z" fill="#e9e4ec" />
          <path d="M60 6h22v52H60z" fill="#e9e7ee" />
          <circle cx="2.500" cy="1.800" r="1.200" fill="#f05b50" />
          {Array.from({ length: 14 }, (_, i) => (
            <path key={i} d={`M6 ${12 + i * 3.200}h${i % 5 === 0 ? 12 : i % 4 === 3 ? 38 : 48}`} stroke="#77777c" strokeWidth="1.300" />
          ))}
          <path d="M69 31l3-6 2 2-4 5z" stroke="#c5c2cc" fill="none" />
        </svg>
        <div className="absolute left-[57px] top-[61px] size-[26px] overflow-hidden rounded-md bg-linear-to-b from-[#fbb33b] to-[#f98a2a]"><Art><PagesArt /></Art></div>
      </div>
      <div className="flex h-full w-[89px] shrink-0 justify-center pt-[7px]">
        <svg width="64" height="82" viewBox="0 0 64 82" strokeLinejoin="round">
          <path d="M2 13q30-8 60 0L55 76q-2 5-23 5T9 76z" fill="#dcdbe0" />
          <path d="M2 13q30-8 60 0l-1 7H3z" fill="#77767c" />
          <path d="M6 12 14 4l8 5 2-8 11 7 5-7 7 8 8-1 3 8-13 3-12-2-13 3z" fill="#f2f2f2" />
          <path d="M12 11l6-4 5 7zM40 8l7-3 4 8-8 4z" fill="#4b5566" />
          <path d="M24 6l6 9-9 1z" fill="#3ab6e0" />
          <path d="M49 10l6 3-4 4z" fill="#d98a4a" />
          <path d="M3 17q29 8 58 0L55 76q-2 5-23 5T9 76z" fill="#e6e5e8" />
          <path d="M14 26q8 4 20 3l-8 10zM40 34l10-6-3 18zM20 48l12 6-8 14z" fill="#d0cfd4" opacity=".7" />
          <path d="M12 24l5 50M52 24l-4 50" stroke="#fff" strokeWidth="2" opacity=".6" />
        </svg>
      </div>
    </nav>
  );
}

export default function App() {
  return (
    <div className="flex h-[1600px] w-[2560px] flex-col overflow-hidden bg-[linear-gradient(90deg,#0a021c_0%,#0d0226_38%,#160540_52%,#1c0648_63%,#4a1065_66%,#430e66_78%,#18053c_85%,#0c0228_100%)]">
      <div className="bg-[#22094f]">
        <MenuBar />
        <div className="mt-0.5 flex h-[70px] flex-col overflow-hidden rounded-t-[20px]">
          <TitleBar />
        </div>
      </div>
      <div className="flex h-[1360px] shrink-0 flex-col overflow-hidden rounded-b-[20px]">
        <ToolBar />
        <div className="relative flex h-[1264px]">
          <Sidebar />
          <div className="relative flex flex-1 overflow-hidden">
            <QuickTools />
            <Document />
          </div>
          <Rail />
        </div>
      </div>
      <Dock />
    </div>
  );
}
